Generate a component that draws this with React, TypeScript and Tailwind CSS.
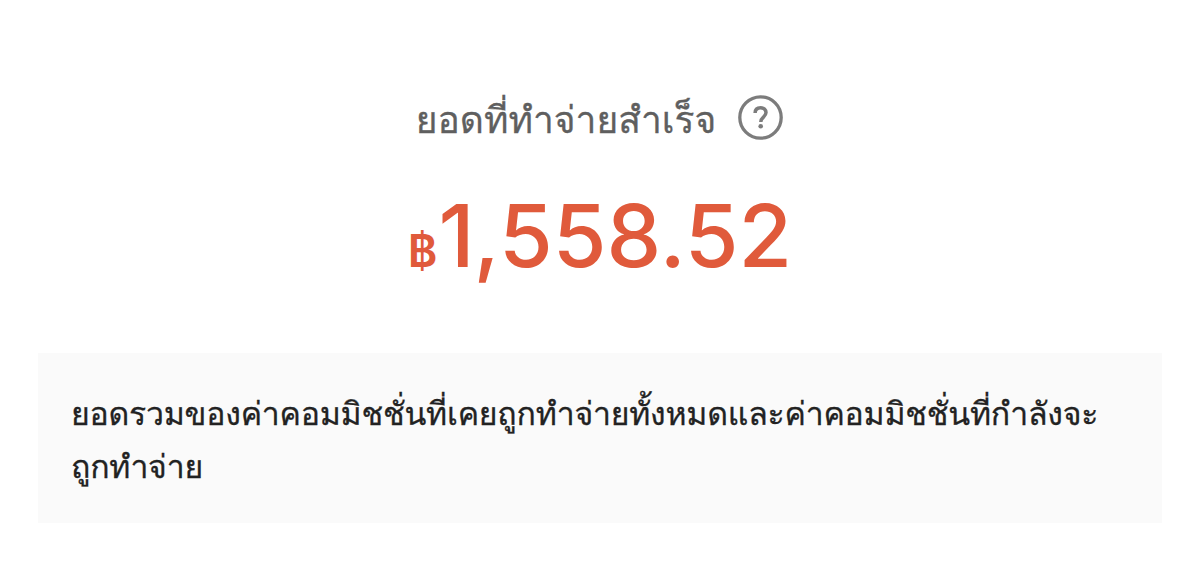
const note = {
  first: "ยอดรวมของค่าคอมมิชชั่นที่เคยถูกทำจ่ายทั้งหมดและค่าคอมมิชชั่นที่กำลังจะ",
  second: "ถูกทำจ่าย",
};

function HelpIcon() {
  return (
    <svg viewBox="0 0 45 45" className="h-[45px] w-[45px] text-[#7c7c7c]" fill="none" stroke="currentColor">
      <circle cx="22.5" cy="22.5" r="20.7" strokeWidth="3.3" />
      <path d="M17.1 18.1c0-3.4 2.2-5.3 5.5-5.3s5.4 1.9 5.4 4.8c0 4.5-5.2 4.6-5.2 9.3" strokeWidth="3.5" />
      <circle cx="22.7" cy="31.2" r="2.3" fill="currentColor" stroke="none" />
    </svg>
  );
}

export default function App() {
  return (
    <main className="h-[566px] w-[1200px] overflow-hidden bg-white px-[38px] pt-[95px] font-['Loma',sans-serif]">
      <div className="flex h-[45px] items-center justify-center gap-[22px] pr-px text-[#5f5f5f]">
        <h1 className="pt-[4px] text-[37.2px] leading-[45px] whitespace-nowrap [-webkit-text-stroke:0.3px]">
          ยอดที่ทำจ่ายสำเร็จ
        </h1>
        <HelpIcon />
      </div>

      <div className="mt-[42px] flex h-[108px] items-baseline justify-center font-['Inter',sans-serif] leading-[108px] font-medium text-[#e05a3b]">
        <span className="mr-px text-[45px] font-semibold">฿</span>
        <span className="text-[87px]">
          1<span className="-ml-px -mr-px">,</span>
          <span>558.52</span>
        </span>
      </div>

      <div className="mt-[63px] h-[170px] bg-[#fafafa] px-[33px] pt-[34px] text-[32px] leading-[53px] tracking-[-0.23px] whitespace-nowrap text-[#222222] [-webkit-text-stroke:0.3px]">
        <p>{note.first}</p>
        <p>{note.second}</p>
      </div>
    </main>
  );
}
